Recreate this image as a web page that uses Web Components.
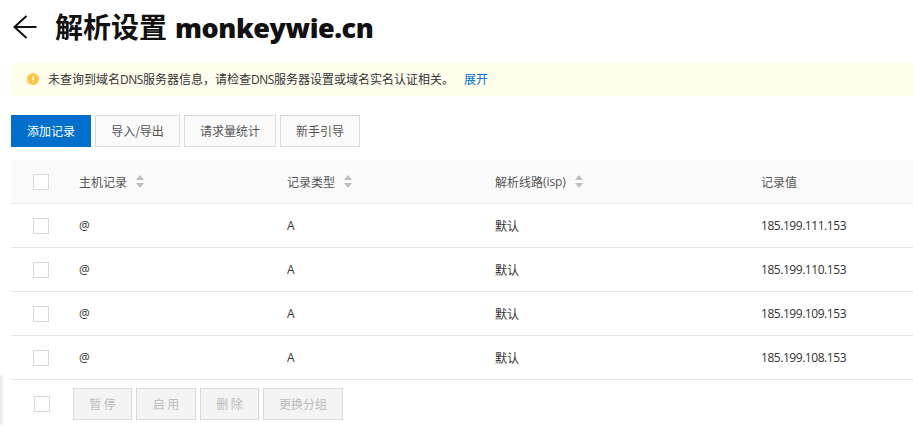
<!DOCTYPE html>
<html lang="zh-CN">
<head>
<meta charset="utf-8">
<title>解析设置</title>
<style>
html, body { margin: 0; height: 100%; overflow: hidden; background: #fff; }
body { font: 12px/18px "Noto Sans CJK SC", sans-serif; color: #333; }
</style>
</head>
<body>
<dns-page></dns-page>
<script>
const define = (name, html, init) => customElements.define(name, class extends HTMLElement {
  constructor() {
    super();
    this.attachShadow({ mode: 'open' }).innerHTML = html;
  }
  connectedCallback() { if (init) init(this); }
});

define('latin-text', `<style>
:host { font-family: "Open Sans", "Noto Sans", sans-serif; font-size: var(--latin-size, 12px); letter-spacing: var(--latin-gap, -0.45px); line-height: 1; }
</style><slot></slot>`);

define('page-title', `<style>
:host { display: flex; align-items: center; height: 54px; padding-left: 13px; color: #111; }
svg { display: block; width: 24px; height: 24px; margin-right: 18px; }
h1 { margin: -3px 0 0; font-size: 28px; line-height: 40px; font-weight: 700; white-space: nowrap; display: flex; align-items: baseline; gap: 8px; }
latin-text { --latin-size: 27px; --latin-gap: -0.45px; font-weight: 800; }
</style>
<svg viewBox="0 0 24 24" fill="none" stroke="#111" stroke-width="2"><path d="M23.5 12H1.5M13.5 1L1.5 12l12 11"/></svg>
<h1><span>解析设置</span><latin-text><slot></slot></latin-text></h1>`);

define('notice-bar', `<style>
:host { display: flex; align-items: center; height: 34px; margin: 8px 0 0 11px; padding-left: 16px; box-sizing: border-box; background: #fffdee; white-space: nowrap; }
svg { width: 12px; height: 12px; margin-right: 9px; }
a { color: #0070cc; margin-left: 10px; }
</style>
<svg viewBox="0 0 12 12"><circle cx="6" cy="6" r="6" fill="#ffc440"/><path d="M6 2.7v4.2M6 7.9v1.4" stroke="#fff" stroke-width="1.4"/></svg>
<span><slot></slot></span><a><slot name="action"></slot></a>`);

define('ui-button', `<style>
:host { display: block; }
button { display: block; box-sizing: border-box; width: 100%; height: 32px; margin: 0; padding: 0; border: 1px solid #d9d9d9; border-radius: 0; background: #fafafa; color: #555; font: inherit; white-space: nowrap; }
:host([primary]) button { background: #0070cc; border-color: #0070cc; color: #fff; }
:host([muted]) button { background: #f4f4f4; color: #bbb; }
</style><button><slot></slot></button>`, el => { el.style.width = el.getAttribute('width') + 'px'; });

define('button-row', `<style>:host { display: flex; gap: 4px; }</style><slot></slot>`);

define('check-box', `<style>
:host { display: block; box-sizing: border-box; width: 16px; height: 16px; border: 1px solid #d9d9d9; background: #fff; }
</style>`);

define('sort-arrows', `<style>
:host { display: inline-block; width: 8px; height: 13px; margin-left: 9px; }
svg { display: block; }
</style><svg width="8" height="13" viewBox="0 0 8 13" fill="#bfbfbf"><path d="M4 0l4 5H0zM0 8h8l-4 5z"/></svg>`);

define('record-row', `<style>
:host { display: grid; grid-template-columns: 46px 208px 208px 266px 1fr; align-items: center; box-sizing: border-box; height: 44px; padding-left: 22px; border-bottom: 1px solid #e6e9ec; white-space: nowrap; }
:host([head]) { background: #fafafa; color: #555; }
::slotted(*) { display: flex; align-items: center; }
</style><check-box></check-box><slot></slot>`);

define('record-footer', `<style>
:host { display: flex; align-items: center; height: 48px; padding-left: 23px; }
check-box { margin-right: 23px; }
</style><check-box></check-box><slot></slot>`);

define('side-handle', `<style>
:host { position: absolute; left: 0; top: 375px; width: 3px; height: 50px; background: #ebebeb; border-radius: 0 3px 3px 0; }
</style>`);

const rows = [111, 110, 109, 108].map(n => `<record-row>
  <span><latin-text>@</latin-text></span><span><latin-text>A</latin-text></span>
  <span>默认</span><span><latin-text>185.199.${n}.153</latin-text></span></record-row>`).join('');

define('dns-page', `<style>
:host { display: block; height: 433px; overflow: hidden; }
.tools { margin: 19px 0 13px 11px; }
.table { margin-left: 11px; }
.isp { --latin-gap: -0.1px; }
</style>
<page-title>monkeywie.cn</page-title>
<notice-bar>未查询到域名<latin-text>DNS</latin-text>服务器信息，请检查<latin-text>DNS</latin-text>服务器设置或域名实名认证相关。<span slot="action">展开</span></notice-bar>
<button-row class="tools">
  <ui-button primary width="80">添加记录</ui-button><ui-button width="85">导入/导出</ui-button><ui-button width="92">请求量统计</ui-button><ui-button width="80">新手引导</ui-button>
</button-row>
<div class="table">
  <record-row head><span>主机记录<sort-arrows></sort-arrows></span><span>记录类型<sort-arrows></sort-arrows></span><span>解析线路<latin-text class="isp">(isp)</latin-text><sort-arrows></sort-arrows></span><span>记录值</span></record-row>
  ${rows}
  <record-footer><button-row>
    <ui-button muted width="59">暂 停</ui-button><ui-button muted width="60">启 用</ui-button><ui-button muted width="59">删 除</ui-button><ui-button muted width="80">更换分组</ui-button>
  </button-row></record-footer>
</div>
<side-handle></side-handle>`);
</script>
</body>
</html>
